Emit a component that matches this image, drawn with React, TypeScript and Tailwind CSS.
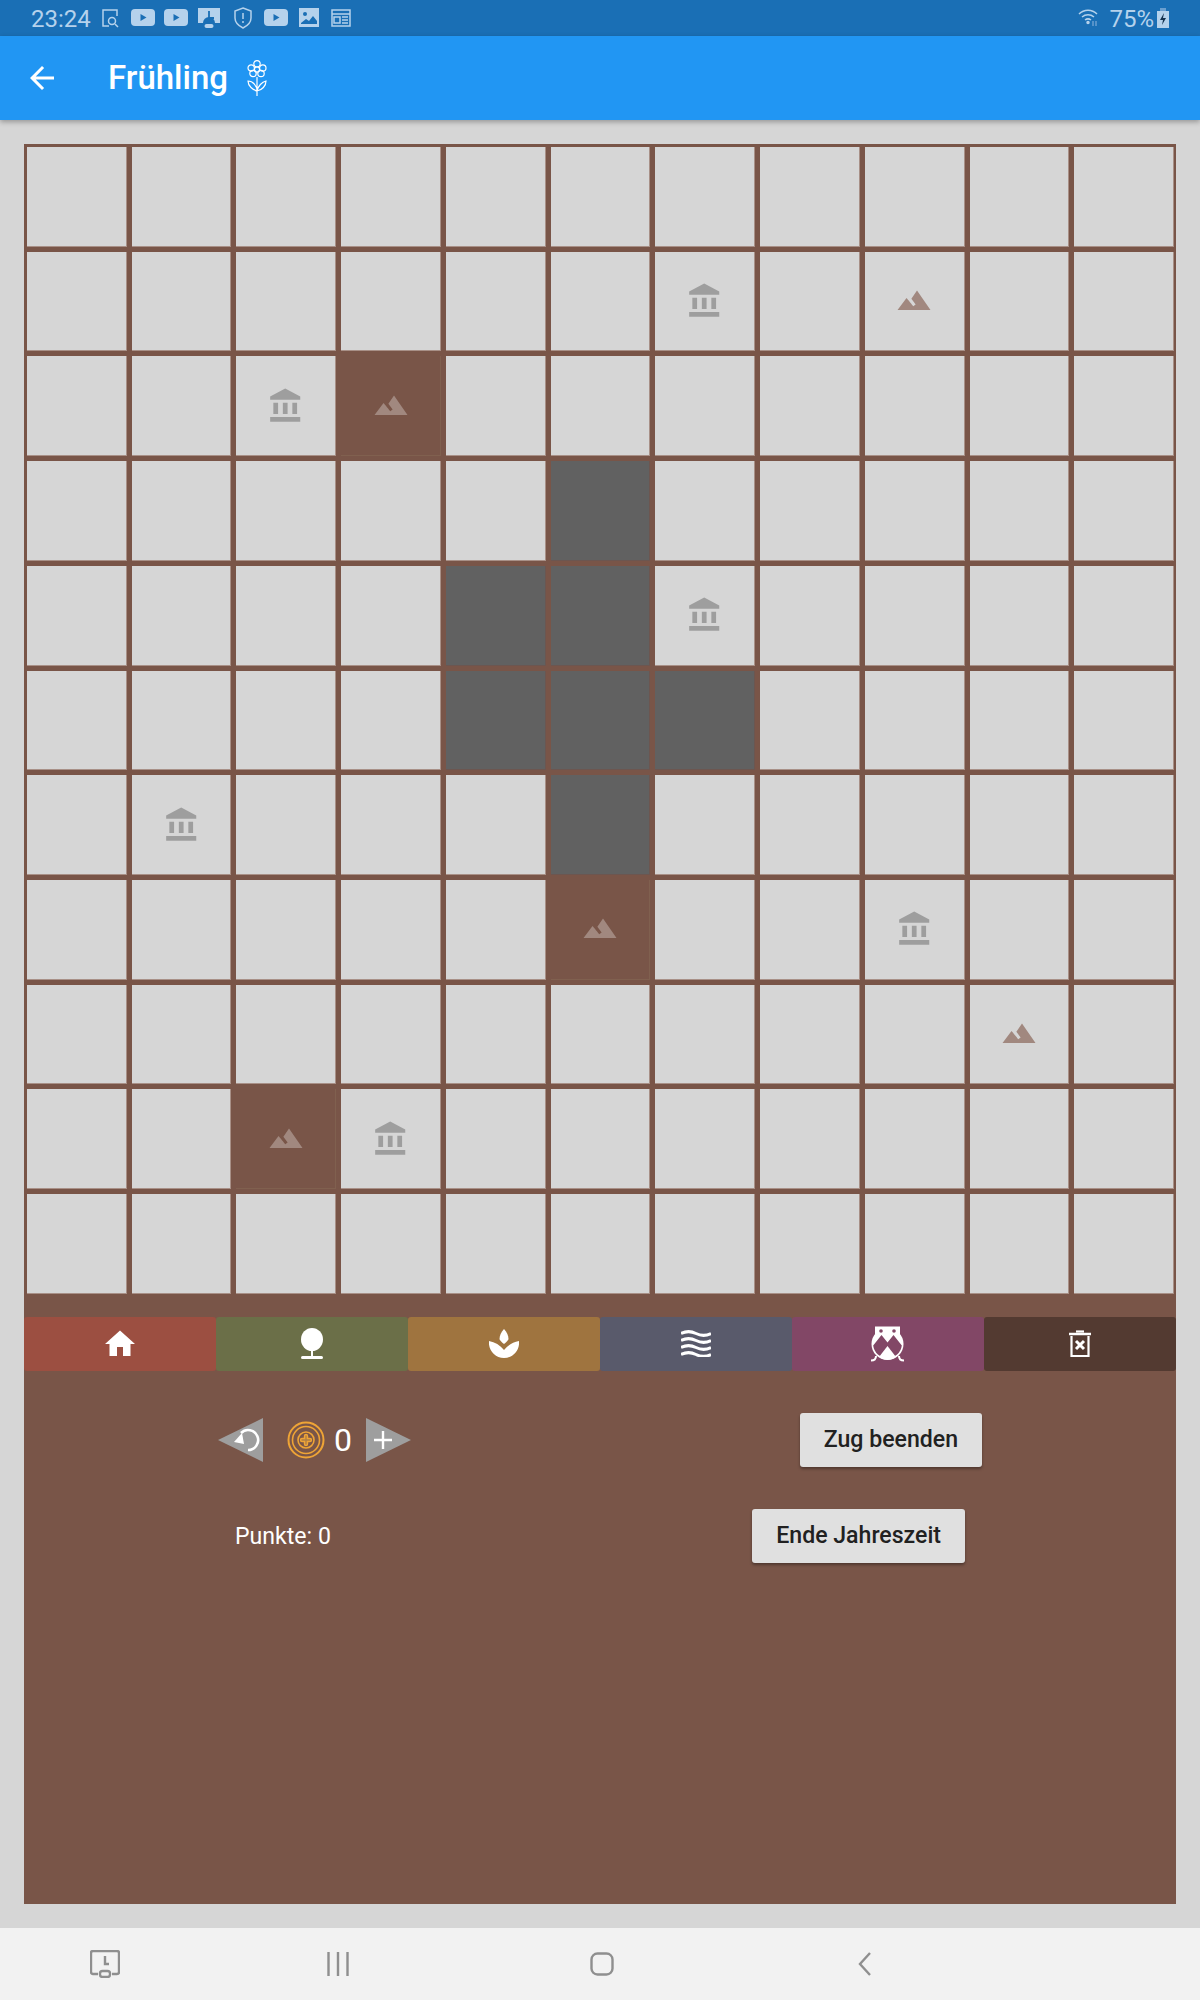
const DARK = ["3-5", "4-4", "4-5", "5-4", "5-5", "5-6", "6-5"];
const BROWN = ["2-3", "7-5", "9-2"];
const TEMPLES = ["1-6", "2-2", "4-6", "6-1", "7-8", "9-3"];
const MOUNTAINS = ["1-8", "2-3", "7-5", "8-9", "9-2"];

function Temple() {
  return (
    <svg viewBox="0 0 24 24" className="ml-[1px] h-[38px] w-[38px] fill-[#9e9e9e]">
      <path d="M4 10v7h3v-7H4zm6 0v7h3v-7h-3zM2 22h19v-3H2v3zm14-12v7h3v-7h-3zm-4.5-9L2 6v2h19V6l-9.5-5z" />
    </svg>
  );
}

function Mountain() {
  return (
    <svg viewBox="0 0 24 24" className="h-9 w-9 fill-[#a1887f]">
      <path d="M14 5l-3.750 5.500 2.850 3.800-1.600 1.200C9.810 13.250 7 10 7 10l-6 8h22L14 5z" />
    </svg>
  );
}

function Cell({ id }: { id: string }) {
  const dark = DARK.includes(id);
  const brown = BROWN.includes(id);
  const fill = dark
    ? "bg-[#616161] border-[#6c5650]"
    : brown
      ? "bg-[#795548] border-[#80604f]"
      : "bg-[#d6d6d6] border-[#a89087]";
  return (
    <div className="h-[104.72px] pt-[3px] pl-[3px] pr-[2px] pb-[2px]">
      <div className={`flex h-full w-full items-center justify-center border-r border-b ${fill}`}>
        {TEMPLES.includes(id) && <Temple />}
        {MOUNTAINS.includes(id) && <Mountain />}
      </div>
    </div>
  );
}

function StatusBar() {
  const c = "#b5d2ec";
  const yt = (
    <svg viewBox="0 0 24 18" className="h-[18px] w-6">
      <rect width="24" height="17" rx="4" fill={c} />
      <path d="M9.500 5l6 3.500-6 3.500z" fill="#1a6fb5" />
    </svg>
  );
  return (
    <div className="flex h-9 items-center bg-[#1a6fb5] pr-[31px] pl-[31px] text-[24px] text-[#b5d2ec]">
      <span className="pt-[2px]">23:24</span>
      <div className="ml-[10px] flex items-center">
        <svg viewBox="0 0 18 20" className="h-5 w-[18px]" fill="none" stroke={c} strokeWidth="1.500">
          <path d="M8 18H2V2h14v6" />
          <circle cx="11" cy="13" r="3.500" />
          <path d="M14 16l3 3" />
        </svg>
        <span className="ml-[12px]">{yt}</span>
        <span className="ml-[9px]">{yt}</span>
        <svg viewBox="0 0 22 20" className="ml-[10px] h-5 w-[22px]">
          <path d="M0 0h22v15h-5a6 6 0 00-12 0H0z" fill={c} />
          <path d="M11 3v7h5" stroke="#1a6fb5" strokeWidth="1.800" fill="none" />
          <rect x="6.500" y="16" width="9" height="4" rx="2" fill={c} />
        </svg>
        <svg viewBox="0 0 18 22" className="ml-[14px] h-[22px] w-[18px]" fill="none" stroke={c} strokeWidth="1.500">
          <path d="M9 1l8 3v7c0 5-4 8-8 10-4-2-8-5-8-10V4z" />
          <path d="M9 6v6M9 14v2" />
        </svg>
        <span className="ml-[12px]">{yt}</span>
        <svg viewBox="0 0 20 20" className="ml-[11px] h-5 w-5">
          <rect width="20" height="19" fill={c} />
          <circle cx="6" cy="6" r="2" fill="#1a6fb5" />
          <path d="M2 15l5-4 3 2 4-5 4 5v3H2z" fill="#1a6fb5" />
        </svg>
        <svg viewBox="0 0 20 20" className="ml-[12px] h-5 w-5" fill="none" stroke={c} strokeWidth="1.500">
          <rect x="1" y="2" width="18" height="16" />
          <path d="M1 6h18M3 9h6v6H3zM11 9h6M11 12h6M11 15h6" />
        </svg>
      </div>
      <div className="ml-auto flex items-center">
        <svg viewBox="0 0 22 20" className="h-5 w-[22px]" fill="none" stroke={c} strokeWidth="1.500">
          <path d="M1 6c5-5 13-5 18 0M4 9c3.500-3 8.500-3 12 0M7 12c2-1.500 4-1.500 6 0" />
          <circle cx="10" cy="14.500" r="1" fill={c} />
          <path d="M15 13v5M18 18v-5" stroke="#6a9fd0" />
        </svg>
        <span className="ml-[9px] pt-[2px]">75%</span>
        <svg viewBox="0 0 12 20" className="ml-[3px] h-5 w-3">
          <rect x="3" y="0" width="6" height="3" fill="#6a9fd0" />
          <rect x="0" y="3" width="12" height="17" fill={c} />
          <path d="M7 5l-4 7h3l-1 5 4-7H6z" fill="#14324f" />
        </svg>
      </div>
    </div>
  );
}

function AppBar() {
  return (
    <header className="relative z-10 flex h-[84px] items-center bg-[#2196f3] pl-[24px] text-white shadow-[0_2px_5px_rgba(0,0,0,0.3)]">
      <svg viewBox="0 0 24 24" className="h-9 w-9 fill-white">
        <path d="M20 11H7.830l5.590-5.590L12 4l-8 8 8 8 1.410-1.410L7.830 13H20v-2z" />
      </svg>
      <span className="ml-[48px] text-[33px] font-medium">Frühling</span>
      <svg viewBox="0 0 20 36" className="ml-[19px] h-9 w-5" fill="none" stroke="white" strokeWidth="1.200">
        <circle cx="10" cy="3.800" r="3.200" />
        <circle cx="15.800" cy="8" r="3.200" />
        <circle cx="14" cy="13.500" r="3.200" />
        <circle cx="6" cy="13.500" r="3.200" />
        <circle cx="4.200" cy="8" r="3.200" />
        <circle cx="10" cy="9.500" r="2.600" />
        <path d="M10 17v19M10 31C6 30 1 26 1 21c5 0 9 5 9 10zM10 31c1-5 5-9 9-10 0 5-4 9-9 10z" />
      </svg>
    </header>
  );
}

function ToolButton({ color, children }: { color: string; children: React.ReactNode }) {
  return <button className={`flex h-[54px] items-center justify-center rounded-[3px] ${color}`}>{children}</button>;
}

function Toolbar() {
  return (
    <div className="mt-[21px] grid grid-cols-6">
      <ToolButton color="bg-[#9c4f41]">
        <svg viewBox="0 0 24 24" className="h-9 w-9 fill-white">
          <path d="M10 20v-6h4v6h5v-8h3L12 3 2 12h3v8z" />
        </svg>
      </ToolButton>
      <ToolButton color="bg-[#6b6f48]">
        <svg viewBox="0 0 24 32" className="h-8 w-6 fill-white">
          <ellipse cx="12" cy="11.500" rx="11" ry="11.500" />
          <rect x="11" y="20" width="2" height="10" />
          <rect x="1" y="28" width="22" height="3" rx="1.500" />
        </svg>
      </ToolButton>
      <ToolButton color="bg-[#9f743f]">
        <svg viewBox="0 0 30 30" className="h-[30px] w-[30px] fill-white">
          <path d="M15 0c3 3 4.500 7 4.500 10 0 1-3 4-4.500 5-1.500-1-4.500-4-4.500-5 0-3 1.500-7 4.500-10z" />
          <path d="M0 12c6 1 11 4 15 9 4-5 9-8 15-9 1 9-6 17-15 17S-1 21 0 12z" />
        </svg>
      </ToolButton>
      <ToolButton color="bg-[#595a6b]">
        <svg viewBox="0 0 30 27" className="h-[27px] w-[30px]" fill="none" stroke="white" strokeWidth="3">
          <path d="M0 3.500c5-2.500 10-2.500 15 0s10 2.500 15 0M0 10.500c5-2.500 10-2.500 15 0s10 2.500 15 0M0 17.500c5-2.500 10-2.500 15 0s10 2.500 15 0M0 24.500c5-2.500 10-2.500 15 0s10 2.500 15 0" />
        </svg>
      </ToolButton>
      <ToolButton color="bg-[#824766]">
        <svg viewBox="0 0 36 36" className="h-9 w-9">
          <circle cx="17.500" cy="18" r="16" fill="white" />
          <path d="M5 0.500h25v10H5z" fill="white" />
          <path d="M3.200 19.500L11.500 9l6 7.500 6-7.500 8.300 10.500A14.400 14.400 0 0 1 3.200 19.500z" fill="#824766" />
          <path d="M17.500 20l-8.500 11c5 3.500 12 3.500 17 0z" fill="white" />
          <circle cx="11" cy="5" r="1.800" fill="#824766" />
          <circle cx="24" cy="5" r="1.800" fill="#824766" />
          <path d="M6 30c0 3-2 4.500-5 4.500M29 30c0 3 2 4.500 5 4.500" fill="none" stroke="white" strokeWidth="2" />
        </svg>
      </ToolButton>
      <ToolButton color="bg-[#533a31]">
        <svg viewBox="0 0 22 28" className="h-7 w-[22px]" fill="none" stroke="white" strokeWidth="2.200">
          <path d="M0 4h22" strokeWidth="2.500" />
          <path d="M7 1.500h8" />
          <path d="M2.500 6v20h17V6" />
          <path d="M7 11l8 8M15 11l-8 8" strokeWidth="3" />
        </svg>
      </ToolButton>
    </div>
  );
}

function Triangle({ dir, children }: { dir: "left" | "right"; children: React.ReactNode }) {
  const pts = dir === "left" ? "45,0 45,44 0,22" : "0,0 0,44 45,22";
  return (
    <svg viewBox="0 0 45 44" className="h-11 w-[45px] overflow-visible">
      <polygon points={pts} fill="#9e9e9e" />
      {children}
    </svg>
  );
}

function Coin() {
  return (
    <svg viewBox="0 0 38 38" className="h-[38px] w-[38px]" fill="none" stroke="#eea436" strokeWidth="2">
      <circle cx="19" cy="19" r="17.500" />
      <circle cx="19" cy="19" r="13.500" strokeWidth="1.600" />
      <circle cx="19" cy="19" r="8" strokeWidth="1.600" />
      <path d="M15 19h8M19 15v8" strokeWidth="4.400" strokeLinecap="round" />
      <path d="M15 19h8M19 15v8" stroke="#b07f45" strokeWidth="1.400" strokeLinecap="round" />
    </svg>
  );
}

function GreyButton({ children }: { children: React.ReactNode }) {
  return (
    <button className="flex h-[54px] items-center rounded-[3px] bg-[#e0e0e0] px-6 text-[23.1px] leading-none font-medium text-[#212121] shadow-[0_2px_3px_rgba(0,0,0,0.35)]">
      {children}
    </button>
  );
}

function NavBar() {
  return (
    <nav className="flex h-[72px] items-center bg-[#f2f2f2] pl-[90px]">
      <svg viewBox="0 0 30 28" className="h-7 w-[30px]" fill="none" stroke="#8f8f8f" strokeWidth="2.400">
        <path d="M8 24H3a2 2 0 01-2-2V3a2 2 0 012-2h24a2 2 0 012 2v19a2 2 0 01-2 2h-5" />
        <path d="M15 6v8h4" />
        <rect x="10" y="21" width="10" height="6" rx="2.500" />
      </svg>
      <svg viewBox="0 0 22 24" className="ml-[207px] h-6 w-[22px]" stroke="#8f8f8f" strokeWidth="2.400">
        <path d="M1.500 0v24M11 0v24M20.500 0v24" />
      </svg>
      <svg viewBox="0 0 24 24" className="ml-[241px] h-6 w-6" fill="none" stroke="#8f8f8f" strokeWidth="2.400">
        <rect x="1.500" y="1.500" width="21" height="21" rx="6" />
      </svg>
      <svg viewBox="0 0 13 24" className="ml-[244px] h-6 w-[13px]" fill="none" stroke="#8f8f8f" strokeWidth="2.400">
        <path d="M12 1L2 12l10 11" />
      </svg>
    </nav>
  );
}

export default function App() {
  const rows = Array.from({ length: 11 }, (_, i) => i);
  return (
    <div className="flex min-h-[2000px] flex-col bg-[#d6d6d6] font-['Roboto',sans-serif]">
      <StatusBar />
      <AppBar />
      <main className="mx-6 mt-6 mb-6 flex flex-1 flex-col bg-[#795548]">
        <div className="grid grid-cols-11">
          {rows.map((r) => rows.map((c) => <Cell key={`${r}-${c}`} id={`${r}-${c}`} />))}
        </div>
        <Toolbar />
        <div className="mt-[42px] flex items-center justify-between px-[194px]">
          <div className="flex items-center">
            <Triangle dir="left">
              <path d="M23 15A10 10 0 1 1 30 32" fill="none" stroke="white" strokeWidth="2.600" />
              <path d="M16 24l10 2-2-11z" fill="white" />
            </Triangle>
            <span className="ml-6"><Coin /></span>
            <span className="ml-[9px] w-[32px] text-[32px] leading-none text-white">0</span>
            <Triangle dir="right">
              <path d="M8 22h18M17 13v18" stroke="white" strokeWidth="2.400" />
            </Triangle>
          </div>
          <GreyButton>Zug beenden</GreyButton>
        </div>
        <div className="mt-[42px] flex items-center justify-between px-[211px]">
          <span className="pt-[2px] text-[23.1px] text-white">Punkte: 0</span>
          <GreyButton>Ende Jahreszeit</GreyButton>
        </div>
      </main>
      <NavBar />
    </div>
  );
}
